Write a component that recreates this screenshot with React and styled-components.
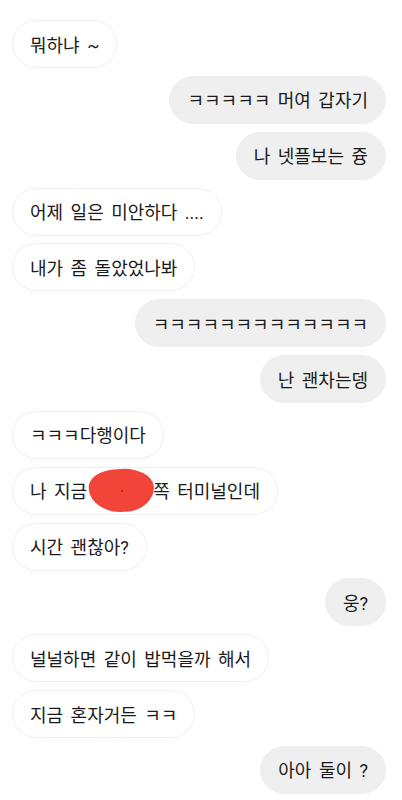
import React from 'react'
import styled, { createGlobalStyle } from 'styled-components'

const GlobalStyle = createGlobalStyle`
  html, body {
    margin: 0;
    padding: 0;
    background: #ffffff;
  }
  body {
    font-family: Roboto, "Noto Sans CJK KR", sans-serif;
    -webkit-font-smoothing: antialiased;
  }
`

const Thread = styled.div`
  display: flex;
  flex-direction: column;
  gap: 7.85px;
  padding: 20px 16px 0 12px;
  width: 402px;
  box-sizing: border-box;
`

const Row = styled.div`
  display: flex;
  justify-content: ${p => (p.$mine ? 'flex-end' : 'flex-start')};
`

const Bubble = styled.div`
  display: flex;
  align-items: center;
  height: 48px;
  box-sizing: border-box;
  padding: 0 17px 1px;
  border-radius: 24px;
  font-size: 18px;
  word-spacing: 3px;
  color: #1a1a1a;
  white-space: nowrap;
  background: ${p => (p.$mine ? '#efefef' : '#ffffff')};
  border: 1px solid ${p => (p.$mine ? '#efefef' : '#f0f0f0')};
`

const Line = styled.span`
  display: flex;
  align-items: center;
`

// red marker scribble over a place name
const Redact = styled.span`
  flex: none;
  width: 65px;
  height: 43px;
  margin: 1px -1px 0 2px;
  background: #f2453a;
  border-radius: 42% 50% 46% 54% / 40% 48% 56% 60%;
  transform: rotate(-4deg);
  display: flex;
  align-items: center;
  justify-content: center;
  &::after {
    content: '';
    width: 2px;
    height: 2px;
    border-radius: 50%;
    background: #b8201a;
  }
`

const messages = [
  { mine: false, text: '뭐하냐 ~' },
  { mine: true, text: 'ㅋㅋㅋㅋㅋ 머여 갑자기' },
  { mine: true, text: '나 넷플보는 즁' },
  { mine: false, text: '어제 일은 미안하다 ....' },
  { mine: false, text: '내가 좀 돌았었나봐' },
  { mine: true, text: 'ㅋㅋㅋㅋㅋㅋㅋㅋㅋㅋㅋㅋㅋ' },
  { mine: true, text: '난 괜차는뎅' },
  { mine: false, text: 'ㅋㅋㅋ다행이다' },
  { mine: false, redacted: true, before: '나 지금', after: '쪽 터미널인데' },
  { mine: false, text: '시간 괜찮아?' },
  { mine: true, text: '웅?' },
  { mine: false, text: '널널하면 같이 밥먹을까 해서' },
  { mine: false, text: '지금 혼자거든 ㅋㅋ' },
  { mine: true, text: '아아 둘이 ?' },
]

const App = () => (
  <>
    <GlobalStyle />
    <Thread>
      {messages.map((m, i) => (
        <Row key={i} $mine={m.mine}>
          <Bubble $mine={m.mine}>
            {m.redacted ? (
              <Line>
                {m.before}
                <Redact />
                {m.after}
              </Line>
            ) : (
              m.text
            )}
          </Bubble>
        </Row>
      ))}
    </Thread>
  </>
)

export default App
